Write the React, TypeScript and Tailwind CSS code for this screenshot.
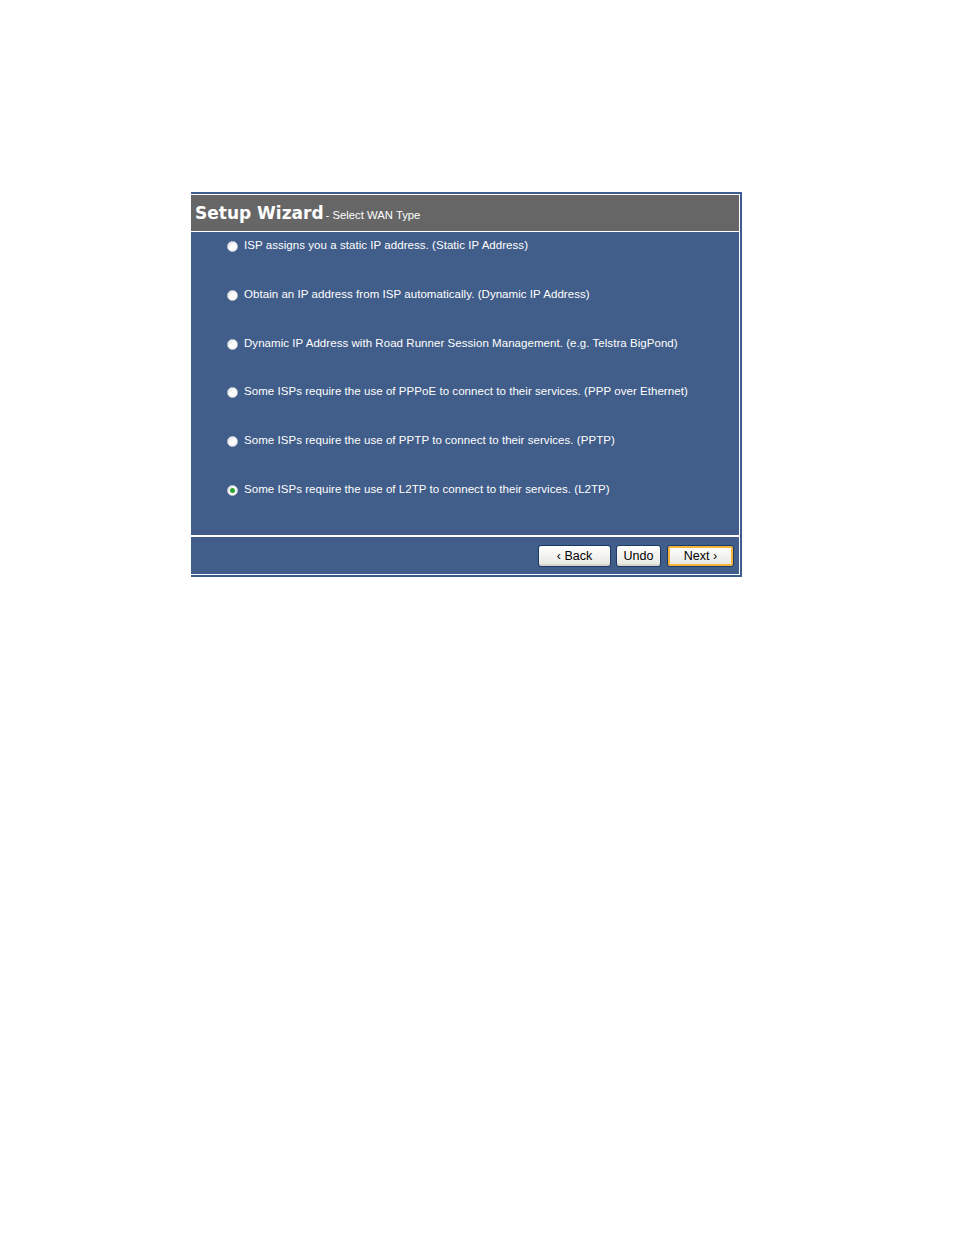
import React, { useState } from "react";

const options = [
  "ISP assigns you a static IP address. (Static IP Address)",
  "Obtain an IP address from ISP automatically. (Dynamic IP Address)",
  "Dynamic IP Address with Road Runner Session Management. (e.g. Telstra BigPond)",
  "Some ISPs require the use of PPPoE to connect to their services. (PPP over Ethernet)",
  "Some ISPs require the use of PPTP to connect to their services. (PPTP)",
  "Some ISPs require the use of L2TP to connect to their services. (L2TP)",
];

function Radio({ checked }: { checked: boolean }) {
  return (
    <span className="mt-[3px] flex h-[11px] w-[11px] shrink-0 items-center justify-center rounded-full border border-[#c9ced6] bg-gradient-to-br from-[#d8dce2] via-white to-[#f4f4f4]">
      {checked && <span className="h-[5px] w-[5px] rounded-full bg-[#2fa52f]" />}
    </span>
  );
}

function Button({ label, primary }: { label: string; primary?: boolean }) {
  return (
    <button
      className={
        "flex h-[22px] w-full items-center justify-center gap-[3px] rounded-[3px] border border-[#1c3a63] bg-gradient-to-b from-white to-[#e6e6e0] text-[12.5px] text-black " +
        (primary
          ? "shadow-[inset_0_0_0_2px_#f6b43c]"
          : "shadow-[inset_0_-2px_0_#d6d6cc]")
      }
      style={{ fontFamily: '"Liberation Sans", Arial, sans-serif' }}
    >
      {label}
    </button>
  );
}

export default function App() {
  const [selected, setSelected] = useState(5);

  return (
    <div className="min-h-[1235px] bg-white pl-[191px] pt-[192px]">
      <div
        className="w-[551px] border-t-2 border-r-2 border-b-2 border-[#3e5d8f] bg-white pt-px pr-px"
        style={{ fontFamily: '"Liberation Sans", Arial, sans-serif' }}
      >
        <div className="flex h-[36px] items-center bg-[#666666] pl-[4px] pt-[1px] text-white">
          <span
            className="text-[17px] font-bold"
            style={{ fontFamily: '"DejaVu Sans", Verdana, sans-serif' }}
          >
            Setup Wizard
          </span>
          <span className="ml-[2px] mt-[4px] text-[11.3px]">- Select WAN Type</span>
        </div>
        <div className="mt-px h-[303px] bg-[#415d89] pl-[36px] pt-[6px]">
          {options.map((o, i) => (
            <div
              key={i}
              className="flex h-[48.8px] cursor-default items-start gap-[6px]"
              onClick={() => setSelected(i)}
            >
              <Radio checked={selected === i} />
              <span className="text-[11.5px] leading-[14px] tracking-[0.05px] text-white">{o}</span>
            </div>
          ))}
        </div>
        <div className="mt-[2px] flex h-[37px] items-center justify-end bg-[#415d89] pr-[5px] pt-[1px]">
          <div className="flex gap-[5px]">
            <div className="w-[73px]">
              <Button label="‹ Back" />
            </div>
            <div className="w-[45px]">
              <Button label="Undo" />
            </div>
            <div className="ml-px w-[67px]">
              <Button label="Next ›" primary />
            </div>
          </div>
        </div>
        <div className="h-px" />
      </div>
    </div>
  );
}
